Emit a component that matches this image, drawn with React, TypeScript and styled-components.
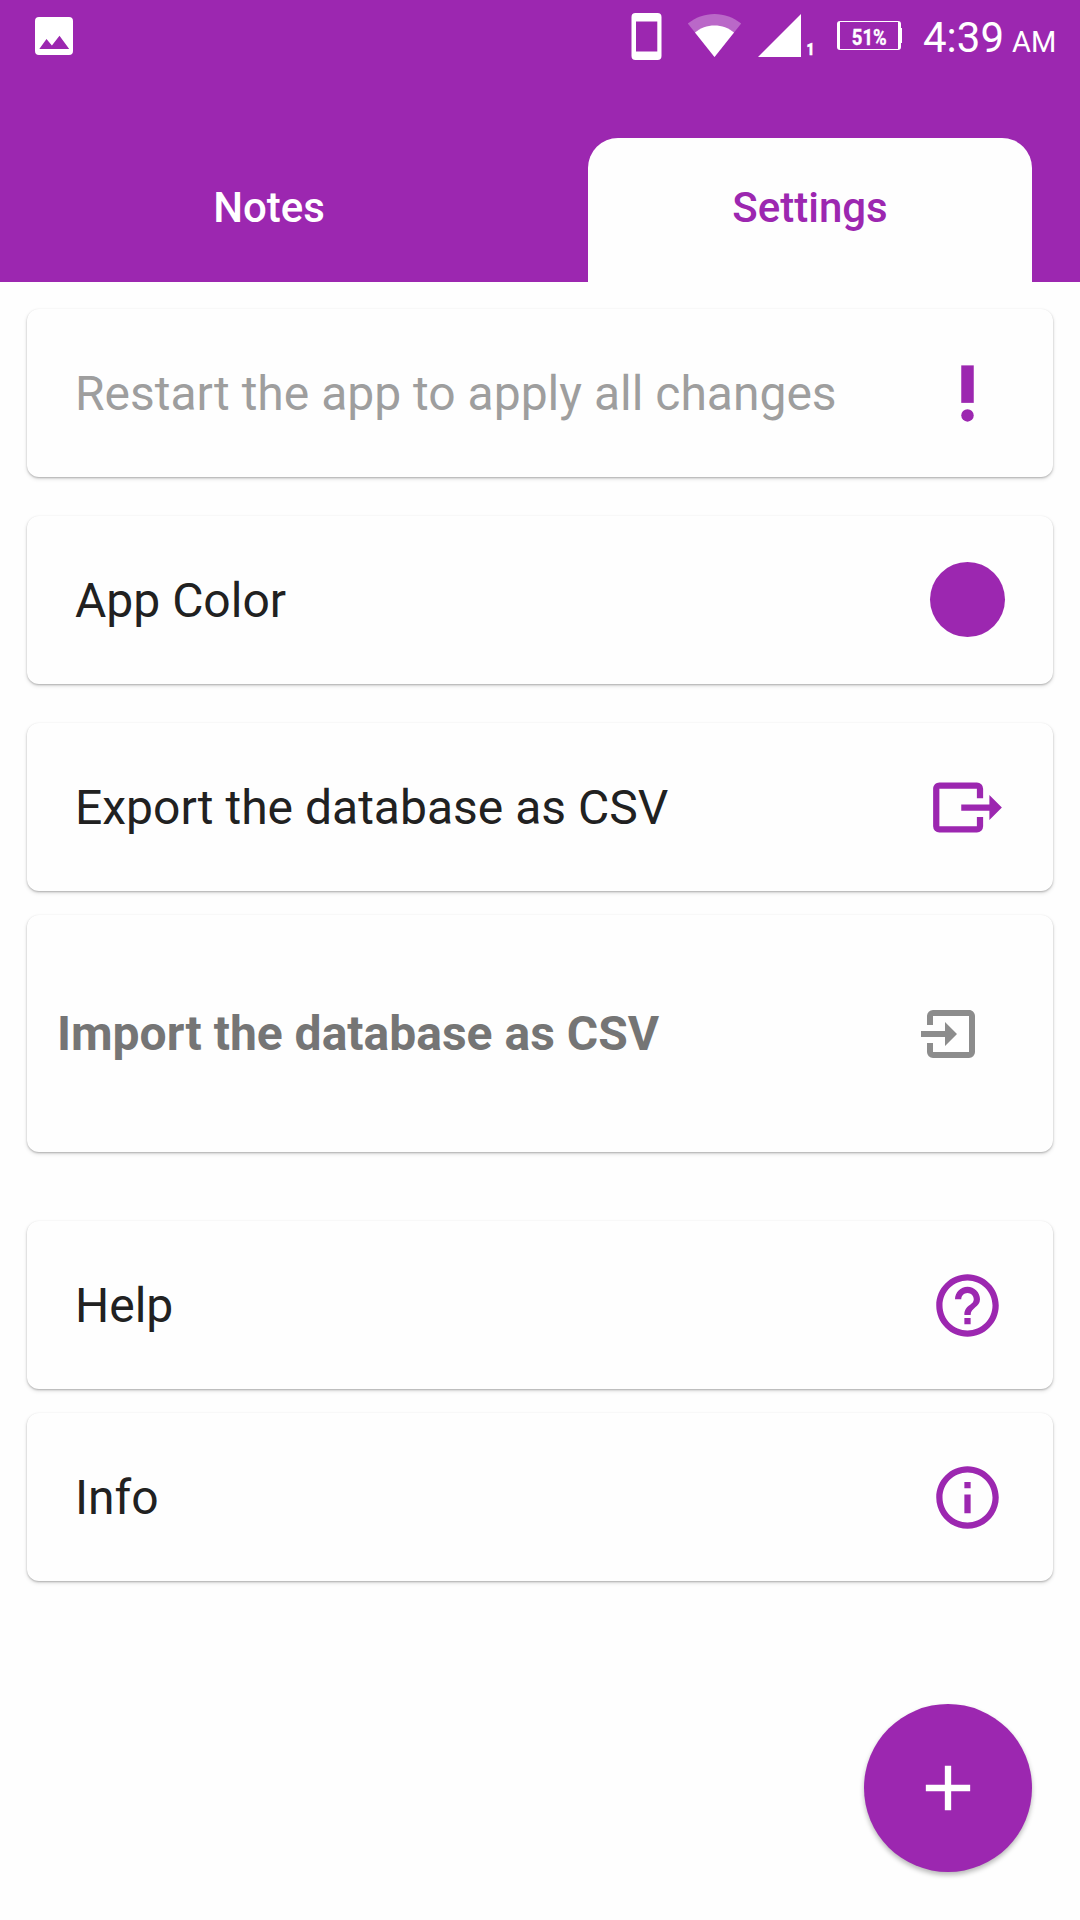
import React from "react";
import styled, { createGlobalStyle } from "styled-components";

const purple = "#9c27b0";
const surface = "#fefefe";

const GlobalStyle = createGlobalStyle`
  * { box-sizing: border-box; }
  body { margin: 0; background: ${surface}; font-family: Roboto, "Noto Sans", sans-serif; }
`;

const Screen = styled.div`
  position: relative;
  width: 1080px;
  height: 1920px;
  overflow: hidden;
  background: ${surface};
`;

const Header = styled.header`
  height: 282px;
  background: ${purple};
`;

const StatusBar = styled.div`
  display: flex;
  align-items: flex-start;
  height: 72px;
  padding: 0 25px 0 35px;
  color: #fff;
`;

const StatusIcon = styled.svg<{ $gap?: number }>`
  display: block;
  flex: none;
  margin-left: ${(p) => p.$gap ?? 0}px;
  fill: #fff;
`;

const Spacer = styled.div`
  flex: 1;
`;

const SimNumber = styled.span`
  width: 7px;
  margin: 41px 0 0 5px;
  font-size: 16px;
  font-weight: 900;
  line-height: 18px;
  transform: scaleX(0.85);
  -webkit-text-stroke: 0.5px #fff;
`;

const Battery = styled.div`
  position: relative;
  display: flex;
  align-items: center;
  justify-content: center;
  width: 64px;
  height: 29px;
  margin: 21px 0 0 24px;
  border: solid #fff;
  border-width: 1.5px 3px;
  border-radius: 3px;

  &::after {
    content: "";
    position: absolute;
    top: 6px;
    right: -4px;
    width: 3px;
    height: 15px;
    background: #fff;
  }
`;

const BatteryLevel = styled.span`
  padding-top: 2px;
  font-size: 22.5px;
  font-weight: 700;
  line-height: 24px;
  transform: scaleX(0.82);
  -webkit-text-stroke: 0.4px #fff;
`;

const Clock = styled.div`
  display: flex;
  align-items: baseline;
  width: 132px;
  margin: 13px 0 0 22px;
  font-size: 42px;
  line-height: 50px;
  white-space: nowrap;
`;

const Meridiem = styled.span`
  margin-left: 8px;
  font-size: 29px;
`;

const Tabs = styled.nav`
  display: flex;
  justify-content: space-between;
  padding: 66px 48px 0;
`;

const Tab = styled.button<{ $active?: boolean }>`
  flex: none;
  width: 444px;
  height: 144px;
  padding: ${(p) => (p.$active ? "0 0 5px" : "0 2px 5px 0")};
  border: 0;
  border-radius: 30px 30px 0 0;
  background: ${(p) => (p.$active ? surface : "transparent")};
  color: ${(p) => (p.$active ? purple : "#fff")};
  font: 500 42px/50px Roboto, sans-serif;
`;

const List = styled.main`
  display: flex;
  flex-direction: column;
  padding: 27px 27px 0;
`;

const Card = styled.section<{ $gap?: number; $tall?: boolean }>`
  display: flex;
  align-items: center;
  justify-content: space-between;
  height: ${(p) => (p.$tall ? 237 : 168)}px;
  margin-top: ${(p) => p.$gap ?? 0}px;
  padding: ${(p) => (p.$tall ? "0 66px 0 30px" : "0 48px")};
  border-radius: 12px;
  background: ${surface};
  box-shadow: 0 1px 2px rgba(0, 0, 0, 0.24), 0 2px 4px rgba(0, 0, 0, 0.12);
`;

const Label = styled.span<{ $tone?: "muted" | "disabled" }>`
  padding-top: ${(p) => (p.$tone === "disabled" ? 0 : 2)}px;
  color: ${(p) => (p.$tone === "muted" ? "#9e9e9e" : p.$tone === "disabled" ? "#757575" : "#212121")};
  font-size: 48px;
  font-weight: ${(p) => (p.$tone === "disabled" ? 700 : 400)};
  line-height: 56px;
  white-space: nowrap;
`;

const Icon = styled.svg<{ $size?: number; $color?: string }>`
  display: block;
  flex: none;
  width: ${(p) => p.$size ?? 75}px;
  height: ${(p) => p.$size ?? 75}px;
  fill: ${(p) => p.$color ?? purple};
`;

const Swatch = styled.span`
  width: 75px;
  height: 75px;
  margin-bottom: 1px;
  border-radius: 50%;
  background: ${purple};
`;

const AddButton = styled.button`
  position: absolute;
  right: 48px;
  bottom: 48px;
  display: flex;
  align-items: center;
  justify-content: center;
  width: 168px;
  height: 168px;
  padding: 0;
  border: 0;
  border-radius: 50%;
  background: ${purple};
  box-shadow: 0 3px 5px rgba(0, 0, 0, 0.28);
`;

export default function App() {
  return (
    <Screen>
      <GlobalStyle />
      <Header>
        <StatusBar>
          <StatusIcon width="38" height="72" viewBox="35 0 38 72">
            <path
              fillRule="evenodd"
              d="M39 17h30a4 4 0 0 1 4 4v30a4 4 0 0 1-4 4H39a4 4 0 0 1-4-4V21a4 4 0 0 1 4-4zM39.3 49h29.9l-9.7-13.2-7.6 9.6-5.4-6.4z"
            />
          </StatusIcon>
          <Spacer />
          <StatusIcon width="31" height="72" viewBox="631 0 31 72">
            <path
              fillRule="evenodd"
              d="M635.5 13h22a4 4 0 0 1 4 4v39a4 4 0 0 1-4 4h-22a4 4 0 0 1-4-4V17a4 4 0 0 1 4-4zM636 21.5v30h21.3v-30z"
            />
          </StatusIcon>
          <StatusIcon $gap={25} width="55" height="72" viewBox="687 0 55 72">
            <path opacity="0.3" d="M714.5 57L687.8 23.6C695.5 17.4 704.5 14 714.5 14s19 3.400 26.700 9.600z" />
            <path d="M714.500 57L695 32.500C700.500 28 707 25.500 714.500 25.500s14 2.500 19.500 7z" />
          </StatusIcon>
          <StatusIcon $gap={16} width="43" height="72" viewBox="758 0 43 72">
            <path d="M758 57h43V14z" />
          </StatusIcon>
          <SimNumber>1</SimNumber>
          <Battery>
            <BatteryLevel>51%</BatteryLevel>
          </Battery>
          <Clock>
            4:39<Meridiem>AM</Meridiem>
          </Clock>
        </StatusBar>
        <Tabs>
          <Tab>Notes</Tab>
          <Tab $active>Settings</Tab>
        </Tabs>
      </Header>
      <List>
        <Card>
          <Label $tone="muted">Restart the app to apply all changes</Label>
          <Icon viewBox="0 0 24 24">
            <circle cx="12" cy="19" r="2" />
            <path d="M10 3h4v12h-4z" />
          </Icon>
        </Card>
        <Card $gap={39}>
          <Label>App Color</Label>
          <Swatch />
        </Card>
        <Card $gap={39}>
          <Label>Export the database as CSV</Label>
          <Icon viewBox="0 0 24 24">
            <path d="M23 12l-4-4v3h-9v2h9v3M1 18V6c0-1.110.9-2 2-2h12a2 2 0 0 1 2 2v3h-2V6H3v12h12v-3h2v3a2 2 0 0 1-2 2H3a2 2 0 0 1-2-2z" />
          </Icon>
        </Card>
        <Card $gap={24} $tall>
          <Label $tone="disabled">Import the database as CSV</Label>
          <Icon viewBox="0 0 24 24" $size={72} $color="#8c8c8c">
            <path d="M14 12l-4-4v3H2v2h8v3M20 18V6c0-1.110-.9-2-2-2H6a2 2 0 0 0-2 2v3h2V6h12v12H6v-3H4v3a2 2 0 0 0 2 2h12a2 2 0 0 0 2-2z" />
          </Icon>
        </Card>
        <Card $gap={69}>
          <Label>Help</Label>
          <Icon viewBox="0 0 24 24">
            <path d="M11 18h2v-2h-2v2zm1-16C6.480 2 2 6.480 2 12s4.480 10 10 10 10-4.480 10-10S17.520 2 12 2zm0 18c-4.410 0-8-3.590-8-8s3.590-8 8-8 8 3.590 8 8-3.590 8-8 8zm0-14c-2.210 0-4 1.790-4 4h2c0-1.100.9-2 2-2s2 .9 2 2c0 2-3 1.750-3 5h2c0-2.250 3-2.500 3-5 0-2.210-1.790-4-4-4z" />
          </Icon>
        </Card>
        <Card $gap={24}>
          <Label>Info</Label>
          <Icon viewBox="0 0 24 24">
            <path d="M11 7h2v2h-2zm0 4h2v6h-2zm1-9C6.480 2 2 6.480 2 12s4.480 10 10 10 10-4.480 10-10S17.520 2 12 2zm0 18c-4.410 0-8-3.590-8-8s3.590-8 8-8 8 3.590 8 8-3.590 8-8 8z" />
          </Icon>
        </Card>
      </List>
      <AddButton aria-label="Add">
        <Icon viewBox="0 0 24 24" $size={76} $color="#fff">
          <path d="M19 13h-6v6h-2v-6H5v-2h6V5h2v6h6v2z" />
        </Icon>
      </AddButton>
    </Screen>
  );
}
